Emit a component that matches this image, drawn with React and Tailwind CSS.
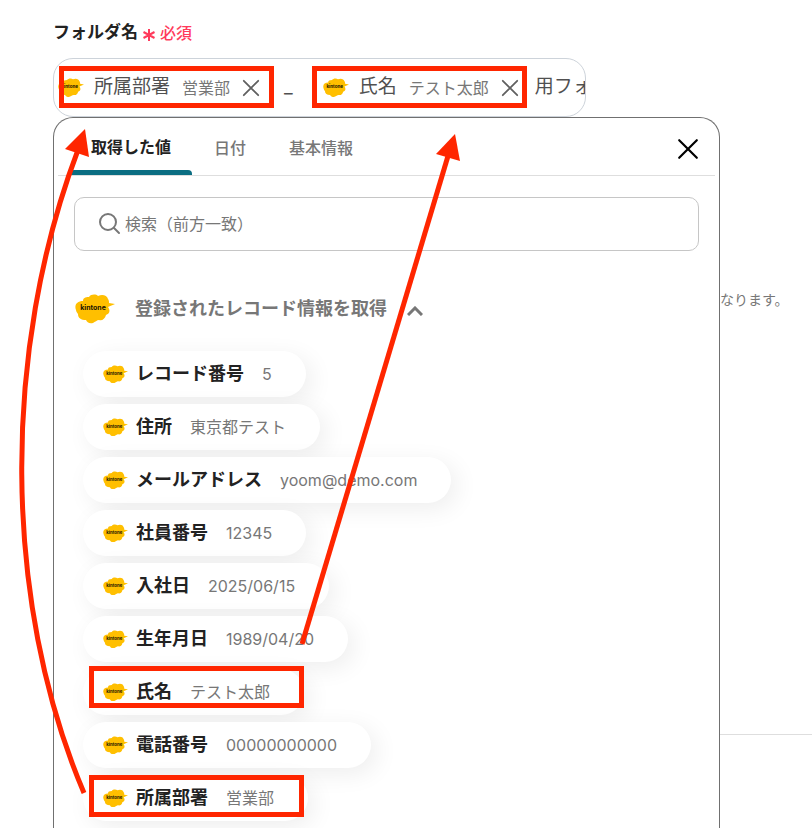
import React from "react"

const records = [
    { label: "レコード番号", value: "5" },
    { label: "住所", value: "東京都テスト" },
    { label: "メールアドレス", value: "yoom@demo.com" },
    { label: "社員番号", value: "12345" },
    { label: "入社日", value: "2025/06/15" },
    { label: "生年月日", value: "1989/04/20" },
    { label: "氏名", value: "テスト太郎" },
    { label: "電話番号", value: "00000000000" },
    { label: "所属部署", value: "営業部" },
]

const KintoneLogo = ({ className }) => (
    <svg viewBox="0 0 40 30" className={className} aria-hidden="true">
        <path
            fill="#ffbf00"
            d="M1 16C-1 11 2 7 8 7C8 4 10 3 14 3C16 0 21 0 23 2C27 0 32 1 33 5C34 6 34 8 34 9L40 10C38 11 35 12 33 13C36 17 34 20 31 21C30 25 27 27 24 26C22 26 20 28 18 29C14 30 12 28 11 26C6 26 3 24 3 20C2 19 1 17 1 16Z"
        />
        <text x="18" y="16" textAnchor="middle" fontSize="7" fontWeight="700" fill="#1a1400">kintone</text>
    </svg>
)

const CrossIcon = ({ className, strokeWidth }) => (
    <svg viewBox="0 0 20 20" className={className} fill="none" stroke="currentColor" strokeWidth={strokeWidth} strokeLinecap="round" aria-hidden="true">
        <path d="M2 2L18 18M18 2L2 18" />
    </svg>
)

const FieldChip = ({ label, value }) => (
    <span className="flex shrink-0 items-center">
        <KintoneLogo className="mr-[10px] w-[26px]" />
        <span className="mr-3 text-[19px] text-[#505050]">{label}</span>
        <span className="mr-3 text-base text-[#777]">{value}</span>
        <button type="button" aria-label={`${label}を削除`} className="text-[#606060]">
            <CrossIcon className="size-[18px]" strokeWidth="2" />
        </button>
    </span>
)

const RecordPill = ({ label, value }) => (
    <li>
        <button type="button" className="flex h-[46px] items-center rounded-full bg-white pr-[34px] pl-5 whitespace-nowrap shadow-[6px_6px_24px_rgba(0,0,0,0.07)]">
            <KintoneLogo className="mr-2 w-[25px]" />
            <span className="mr-[18px] text-lg font-bold text-[#222]">{label}</span>
            <span className="text-base text-[#777]">{value}</span>
        </button>
    </li>
)

// red frames and arrows drawn over the form
const Annotations = () => (
    <svg width="812" height="828" className="pointer-events-none absolute top-0 left-0" fill="none" stroke="#ff2600" strokeWidth="5" aria-hidden="true">
        <rect x="61.5" y="68.5" width="210" height="37" />
        <rect x="314.5" y="68.5" width="210" height="37" />
        <rect x="91.5" y="668.5" width="210" height="37" />
        <rect x="91.5" y="777.5" width="210" height="37" />
        <path d="M84 793C2 600 2 350 78 150" />
        <path d="M302 644L448 156" />
        <path fill="#ff2600" stroke="none" d="M85 129L65 149L89 157Z" />
        <path fill="#ff2600" stroke="none" d="M455 134L436 154L460 161Z" />
    </svg>
)

const App = () => {
    return (
        <div className="relative flex min-h-screen flex-col overflow-hidden bg-white font-[Inter,'Noto_Sans_CJK_JP',sans-serif]">
            <div className="flex h-[58px] items-center gap-1 pt-2 pl-[53px]">
                <span className="text-[17px] font-bold text-[#222]">フォルダ名</span>
                <svg viewBox="0 0 14 14" className="mt-1 size-[14px]" stroke="#ff3b5c" strokeWidth="2" aria-hidden="true">
                    <path d="M7 1V13M1.5 4L12.5 10M12.5 4L1.5 10" />
                </svg>
                <span className="text-base font-medium text-[#ff3b5c]">必須</span>
            </div>

            <div className="mr-[226px] ml-[53px] flex h-[59px] items-center overflow-hidden rounded-[20px] border border-[#cdd3da] pl-1 whitespace-nowrap">
                <FieldChip label="所属部署" value="営業部" />
                <span className="ml-6 text-[19px] text-[#505050]">_</span>
                <span className="ml-[30px]">
                    <FieldChip label="氏名" value="テスト太郎" />
                </span>
                <span className="ml-4 text-[19px] text-[#505050]">用フォ</span>
            </div>

            <div className="flex flex-1">
                <section className="ml-[53px] min-w-0 flex-1 rounded-t-[20px] border border-b-0 border-[#707070] bg-white">
                    <div className="mx-1 flex h-[58px] items-stretch border-b border-[#dedede]">
                        <div role="tablist" className="flex flex-1 text-base font-medium text-[#777]">
                            <button type="button" role="tab" aria-selected="true" className="ml-3 flex w-[122px] flex-col items-center pt-[6px] font-bold text-[#222]">
                                <span className="flex flex-1 items-center">取得した値</span>
                                <span className="h-[5px] w-full rounded-t bg-[#0b6e82]" />
                            </button>
                            <button type="button" role="tab" aria-selected="false" className="ml-[22px] pt-[2px]">日付</button>
                            <button type="button" role="tab" aria-selected="false" className="ml-[43px] pt-[2px]">基本情報</button>
                        </div>
                        <button type="button" aria-label="閉じる" className="mr-4 pt-1 text-black">
                            <CrossIcon className="size-[22px]" strokeWidth="2" />
                        </button>
                    </div>

                    <div className="mx-5 mt-[21px] flex h-[54px] items-center rounded-[10px] border border-[#c6c6c6] pl-[22px]">
                        <svg viewBox="0 0 24 24" className="mr-1 size-6 text-[#777]" fill="none" stroke="currentColor" strokeWidth="2" strokeLinecap="round" aria-hidden="true">
                            <circle cx="11" cy="10" r="8" />
                            <path d="M17 16L22 21" />
                        </svg>
                        <input type="text" aria-label="検索" placeholder="検索（前方一致）" className="min-w-0 flex-1 text-base outline-none placeholder:text-[#777]" />
                    </div>

                    <button type="button" aria-expanded="true" className="mt-[42px] ml-[21px] flex h-8 items-center text-[#777]">
                        <KintoneLogo className="mr-5 w-10" />
                        <span className="text-lg font-bold">登録されたレコード情報を取得</span>
                        <svg viewBox="0 0 16 10" className="mt-1 ml-5 w-4" fill="none" stroke="currentColor" strokeWidth="3" aria-hidden="true">
                            <path d="M1 9L8 2L15 9" />
                        </svg>
                    </button>

                    <ul className="mt-[26px] flex flex-col gap-[7px] pl-[29px]">
                        {records.map(record => (
                            <RecordPill key={record.label} label={record.label} value={record.value} />
                        ))}
                    </ul>
                </section>

                <div className="w-[92px] shrink-0 pt-[171px]">
                    <p className="text-sm leading-6 whitespace-nowrap text-[#777]">なります。</p>
                    <hr className="mt-[422px] border-[#dedede]" />
                </div>
            </div>

            <Annotations />
        </div>
    )
}

export default App
